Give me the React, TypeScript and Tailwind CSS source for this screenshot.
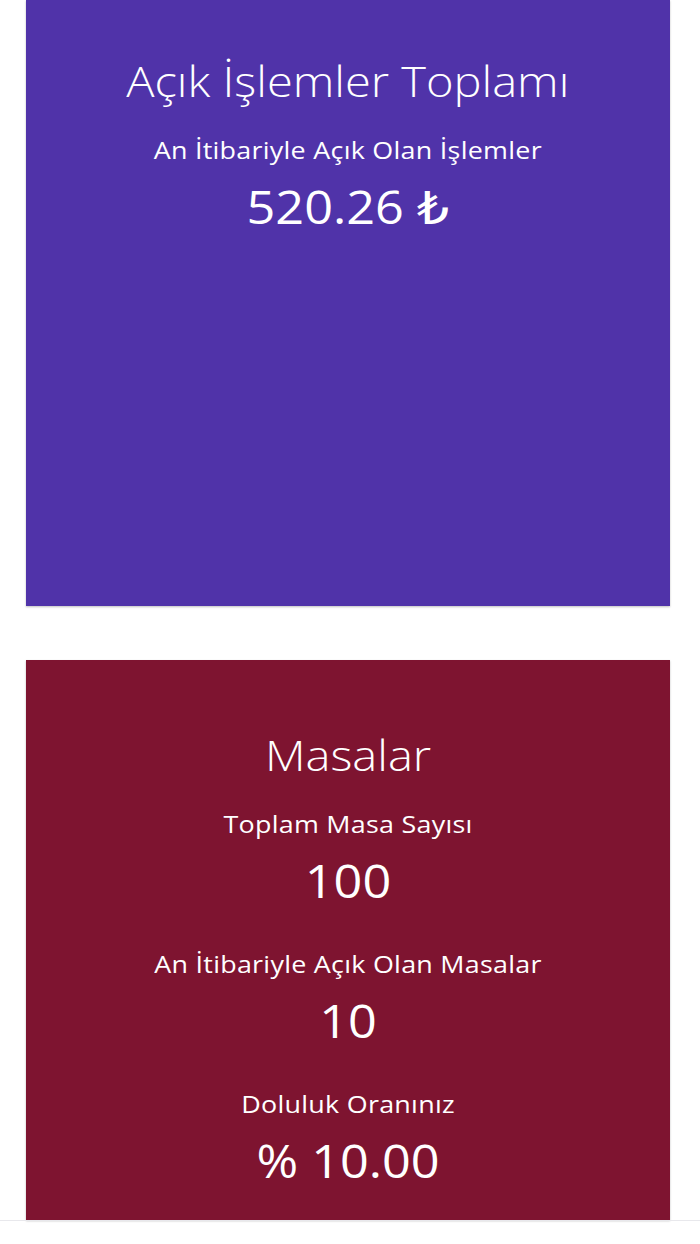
const font = { fontFamily: '"Open Sans", "DejaVu Sans", sans-serif' };

type Stat = { label: string; value: string };

function Card({ title, stats, color, className }: { title: string; stats: Stat[]; color: string; className: string }) {
    return (
        <section className={`${color} ${className} ml-[26px] mr-[30px] flex flex-col items-center text-white text-center shadow-[0_1px_2px_rgba(0,0,0,0.25)]`}>
            <div className="flex flex-col items-center scale-x-[1.12]">
                <h2 className="text-[42px] leading-[48px] font-light">{title}</h2>
                {stats.map((s, i) => (
                    <div key={i} className={`flex flex-col items-center ${i === 0 ? "mt-[30px]" : "mt-[44px]"}`}>
                        <p className="text-[24px] leading-[30px] tracking-[0.01em]">{s.label}</p>
                        <p className="mt-[18px] text-[45px] leading-[48px]">{s.value}</p>
                    </div>
                ))}
            </div>
        </section>
    );
}

export default function App() {
    return (
        <div className="min-h-[1244px] bg-white" style={font}>
            <Card
                title="Açık İşlemler Toplamı"
                stats={[{ label: "An İtibariyle Açık Olan İşlemler", value: "520.26 ₺" }]}
                color="bg-[#5033a9]"
                className="h-[606px] pt-[57px]"
            />
            <div className="h-[54px]" />
            <Card
                title="Masalar"
                stats={[
                    { label: "Toplam Masa Sayısı", value: "100" },
                    { label: "An İtibariyle Açık Olan Masalar", value: "10" },
                    { label: "Doluluk Oranınız", value: "% 10.00" },
                ]}
                color="bg-[#7e1430]"
                className="h-[560px] pt-[71px]"
            />
            <div className="h-px bg-[#e8e8ec]" />
        </div>
    );
}
